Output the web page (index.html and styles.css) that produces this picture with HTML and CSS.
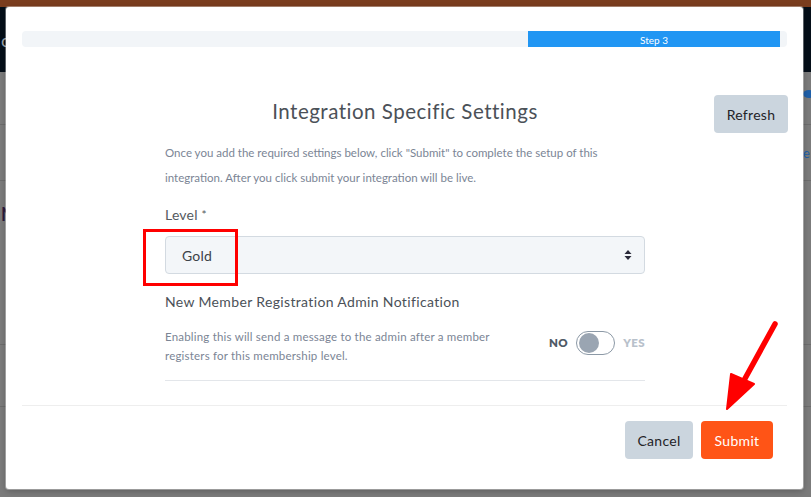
FILE: index.html
```html
<!DOCTYPE html>
<html lang="en">
<head>
<meta charset="utf-8">
<title>Integration Specific Settings</title>
<link rel="stylesheet" href="styles.css">
</head>
<body>
<div class="page">
  <div class="topbar"></div>
  <div class="navbar"><span class="nav-text">co</span></div>
  <div class="row row-a"><span class="row-right-icon"><svg width="12" height="10" viewBox="0 0 12 10"><ellipse cx="6" cy="5" rx="6" ry="4" fill="#1f5fa8"/></svg></span></div>
  <div class="row row-b"><span class="row-right-text">Advance</span></div>
  <div class="row row-c"><span class="row-left-text">Na</span></div>
  <div class="row row-d"></div>
  <div class="row row-e"></div>
</div>

<div class="modal">
  <div class="progress">
    <div class="progress-fill">Step 3</div>
  </div>

  <div class="modal-body">
    <div class="header">
      <div></div>
      <h2 class="title">Integration Specific Settings</h2>
      <button class="btn btn-grey btn-refresh">Refresh</button>
    </div>

    <div class="content">
      <p class="intro">Once you add the required settings below, click "Submit" to complete the setup of this integration. After you click submit your integration will be live.</p>

      <label class="label">Level <span class="req">*</span></label>
      <div class="select">
        <span class="select-value">Gold</span>
        <svg class="select-arrow" width="8" height="12" viewBox="0 0 8 12"><path d="M4 1 L7.5 5 L0.5 5 Z M4 11 L7.5 7 L0.5 7 Z" fill="#2a2a3a"/></svg>
      </div>

      <div class="setting-title">New Member Registration Admin Notification</div>
      <div class="setting-row">
        <p class="setting-desc">Enabling this will send a message to the admin after a member registers for this membership level.</p>
        <div class="toggle-group">
          <span class="toggle-no">NO</span>
          <span class="toggle"><span class="knob"></span></span>
          <span class="toggle-yes">YES</span>
        </div>
      </div>
      <div class="divider"></div>
    </div>
  </div>

  <div class="footer">
    <button class="btn btn-grey btn-cancel">Cancel</button>
    <button class="btn btn-orange btn-submit">Submit</button>
  </div>
</div>

<div class="highlight-box"></div>
<svg class="arrow" width="811" height="497" viewBox="0 0 811 497">
  <line x1="775" y1="324" x2="742" y2="384" stroke="#ff0000" stroke-width="5.5" stroke-linecap="round"/>
  <path d="M727 409 L731 374 L754 384 Z" fill="#ff0000" stroke="#ff0000" stroke-width="2" stroke-linejoin="round"/>
</svg>
</body>
</html>
```

FILE: styles.css
```css
* { box-sizing: border-box; }

html, body {
  margin: 0;
  padding: 0;
  width: 811px;
  height: 497px;
  overflow: hidden;
  font-family: "Lato", "Noto Sans", sans-serif;
}

.page {
  width: 811px;
  height: 497px;
  background: #7b7b7b;
  display: flex;
  flex-direction: column;
}

.topbar {
  height: 7px;
  background: #7a3d1e;
}

.navbar {
  height: 65px;
  background: #040e18;
  display: flex;
  align-items: center;
}

.nav-text {
  color: #9aa3ad;
  font-size: 18px;
  margin-left: 1px;
}

.row {
  border-bottom: 1px solid #6c6c6c;
  display: flex;
  align-items: center;
  justify-content: space-between;
}

.row-a { height: 53px; }
.row-b { height: 56px; }
.row-c { height: 164px; }
.row-d { height: 62px; }
.row-e { flex: 1; border-bottom: none; }

.row-right-icon {
  margin-left: auto;
  margin-right: -4px;
  margin-top: -8px;
  display: flex;
}

.row-right-text {
  margin-left: auto;
  margin-right: 1px;
  color: #1f5fa8;
  font-size: 13px;
}

.row-left-text {
  align-self: flex-start;
  margin-top: 22px;
  margin-left: 1px;
  color: #2b1a3d;
  font-size: 18px;
  font-weight: 700;
}

.modal {
  position: absolute;
  left: 6px;
  top: 7px;
  width: 797px;
  height: 482px;
  background: #ffffff;
  border-radius: 3px;
  box-shadow: 0 0 0 1px rgba(255,255,255,0.35), 0 2px 6px rgba(0,0,0,0.25);
  display: flex;
  flex-direction: column;
  padding-top: 24px;
}

.progress {
  margin: 0 16px;
  height: 16px;
  background: #f2f5f8;
  border-radius: 4px;
  display: flex;
}

.progress-fill {
  margin-left: 66.15%;
  width: 32.95%;
  background: #2196f3;
  color: #ffffff;
  font-size: 10px;
  display: flex;
  align-items: center;
  justify-content: center;
  line-height: 1;
  padding-top: 1px;
}

.modal-body {
  padding: 48px 15px 0 16px;
}

.header {
  display: grid;
  grid-template-columns: 1fr auto 1fr;
  align-items: center;
  height: 38px;
}

.title {
  margin: 0 0 7px 0;
  font-size: 20.5px;
  font-weight: 400;
  color: #4b5158;
  letter-spacing: 0.5px;
}

.btn {
  font-family: "Lato", "Noto Sans", sans-serif;
  font-size: 14px;
  letter-spacing: 0.3px;
  border: none;
  border-radius: 4px;
  height: 38px;
  padding: 0;
  cursor: pointer;
}

.btn-grey {
  background: #cbd5de;
  color: #1f2328;
}

.btn-orange {
  background: #ff5416;
  color: #ffffff;
}

.btn-refresh {
  justify-self: end;
  width: 74px;
}

.btn-cancel { width: 68px; }
.btn-submit { width: 72px; }

.content {
  width: 480px;
  margin: 0 auto;
  display: flex;
  flex-direction: column;
}

.intro {
  margin: 7px 0 0 0;
  font-size: 11.5px;
  line-height: 25px;
  color: #7b8595;
  letter-spacing: 0;
}

.label {
  margin-top: 16px;
  font-size: 14px;
  line-height: 18px;
  color: #555a60;
  letter-spacing: 0.2px;
}

.req {
  color: #555a60;
  font-size: 12px;
  vertical-align: top;
}

.select {
  margin-top: 12px;
  height: 38px;
  background: #f3f6f9;
  border: 1px solid #d3dae1;
  border-radius: 4px;
  display: flex;
  align-items: center;
  justify-content: space-between;
  padding: 0 12px 0 16px;
}

.select-value {
  font-size: 14px;
  color: #3c4248;
  letter-spacing: 0.2px;
}

.setting-title {
  margin-top: 19px;
  font-size: 14px;
  line-height: 18px;
  color: #4b5158;
  letter-spacing: 0.35px;
}

.setting-row {
  display: flex;
  align-items: center;
  justify-content: space-between;
  margin-top: 16px;
}

.setting-desc {
  margin: 0;
  width: 345px;
  font-size: 11.5px;
  line-height: 19px;
  color: #7b8595;
  letter-spacing: 0.2px;
}

.toggle-group {
  display: flex;
  align-items: center;
  gap: 8px;
  margin-top: -7px;
}

.toggle-no {
  font-size: 11.5px;
  font-weight: 800;
  color: #4f5a66;
  letter-spacing: 0.4px;
}

.toggle-yes {
  font-size: 11.5px;
  font-weight: 800;
  color: #b8c1cb;
  letter-spacing: 0.4px;
}

.toggle {
  width: 39px;
  height: 24px;
  border: 1px solid #8c99a6;
  border-radius: 12px;
  display: flex;
  align-items: center;
  padding-left: 2px;
}

.knob {
  width: 20px;
  height: 20px;
  border-radius: 50%;
  background: #9aa5b2;
}

.divider {
  margin-top: 15px;
  height: 1px;
  background: #e3e6ea;
}

.footer {
  margin: 24px 16px 0 16px;
  border-top: 1px solid #eeeeee;
  display: flex;
  justify-content: flex-end;
  gap: 8px;
  padding: 15px 14px 0 0;
}

.highlight-box {
  position: absolute;
  left: 143px;
  top: 229px;
  width: 95px;
  height: 57px;
  border: 3px solid #ff0000;
}

.arrow {
  position: absolute;
  left: 0;
  top: 0;
  pointer-events: none;
}
```
